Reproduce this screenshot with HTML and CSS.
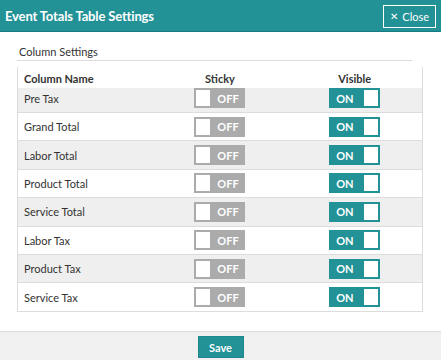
FILE: index.html
```html
<!DOCTYPE html>
<html lang="en">
<head>
  <meta charset="UTF-8" />
  <meta name="viewport" content="width=device-width, initial-scale=1.0"/>
  <title>Event Totals Table Settings</title>
  <link rel="stylesheet" href="styles.css">
</head>

<body>

  <header class="modal-header">
    <h1 class="modal-title">Event Totals Table Settings</h1>
    <button class="close-btn" type="button"><span class="close-x">&#x2715;</span> Close</button>
  </header>

  <main class="modal-body">
    <div class="section-title">Column Settings</div>

    <div class="settings-table">
      <div class="table-head">
        <div class="cell name">Column Name</div>
        <div class="cell center">Sticky</div>
        <div class="cell center">Visible</div>
      </div>

      <div class="table-rows" id="rows"></div>
    </div>
  </main>

  <footer class="modal-footer">
    <button class="save-btn" type="button">Save</button>
  </footer>

  <script>
    const columns = ["Pre Tax", "Grand Total", "Labor Total", "Product Total",
      "Service Total", "Labor Tax", "Product Tax", "Service Tax"];
    const rows = document.getElementById("rows");

    // build each row with its two switches
    columns.forEach((name) => {
      const row = document.createElement("div");
      row.className = "row";
      row.innerHTML =
        '<div class="cell name">' + name + '</div>' +
        '<div class="cell center"><span class="switch off"><span class="knob"></span><span class="label">OFF</span></span></div>' +
        '<div class="cell center"><span class="switch on"><span class="label">ON</span><span class="knob"></span></span></div>';
      rows.appendChild(row);
    });
  </script>

</body>
</html>
```

FILE: styles.css
```css
* {
  margin: 0;
  padding: 0;
  box-sizing: border-box;
  font-family: 'Lato', 'Liberation Sans', sans-serif;
}

body {
  background: #fff;
  color: #333;
  width: 441px;
  height: 360px;
  overflow: hidden;
  display: flex;
  flex-direction: column;
}

.modal-header {
  height: 32px;
  background: #229297;
  border-bottom: 1px solid #187b80;
  display: flex;
  align-items: center;
  justify-content: space-between;
  padding: 0 5px 0 5px;
}

.modal-title {
  color: #fff;
  font-size: 13px;
  font-weight: 700;
  letter-spacing: -0.15px;
}

.close-btn {
  background: transparent;
  border: 1.5px solid #fff;
  color: #fff;
  font-size: 11px;
  height: 23px;
  width: 53px;
  display: flex;
  align-items: center;
  justify-content: center;
  gap: 4px;
  margin-top: 1px;
}

.close-x {
  font-size: 10px;
  font-family: 'DejaVu Sans', sans-serif;
}

.modal-body {
  flex: 1;
  padding: 13px 18px 0 17px;
}

.section-title {
  font-size: 11px;
  line-height: 14px;
  padding-left: 2px;
  margin-right: 11px;
  border-bottom: 1px solid #ddd;
  padding-bottom: 1px;
}

.settings-table {
  margin-top: 6px;
  border: 1px solid #ddd;
  border-top: none;
}

.table-head,
.row {
  display: grid;
  grid-template-columns: 1fr 1fr 1fr;
  align-items: center;
}

.table-head {
  height: 21px;
  font-size: 11px;
  font-weight: 700;
  padding-top: 1px;
}

.cell.name {
  padding-left: 6px;
}

.cell.center {
  display: flex;
  justify-content: center;
}

.row {
  height: 28.4px;
  font-size: 11px;
  border-top: 1px solid #dcdcdc;
}

.row:first-child {
  height: 24px;
  border-top: none;
  align-items: start;
}

.row:first-child .cell.name {
  padding-top: 4px;
}

.row:nth-child(odd) {
  background: #efefef;
}

.switch {
  width: 51px;
  height: 20px;
  padding: 2px;
  display: flex;
  align-items: center;
  color: #fff;
  font-size: 11px;
  font-weight: 700;
}

.switch.off {
  background: #ababab;
}

.switch.on {
  background: #229297;
}

.knob {
  width: 14px;
  height: 16px;
  background: #fff;
}

.switch .label {
  flex: 1;
  text-align: center;
}

.switch.off .label {
  padding-left: 2px;
}

.switch.on .label {
  text-align: left;
  padding-left: 5px;
}

.modal-footer {
  height: 29px;
  background: #f0f0f0;
  border-top: 1px solid #ddd;
  display: flex;
  justify-content: center;
  align-items: flex-start;
  padding-top: 4px;
}

.save-btn {
  background: #229297;
  color: #fff;
  border: 1px solid #1d878c;
  width: 46px;
  height: 22px;
  font-size: 11px;
  font-weight: 700;
}
```
